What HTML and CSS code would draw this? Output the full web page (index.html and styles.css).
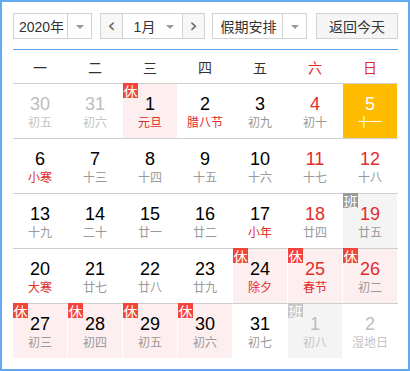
FILE: index.html
```html
<!DOCTYPE html>
<html lang="zh-CN">
<head>
  <meta charset="UTF-8" />
  <title>万年历</title>
  <link rel="stylesheet" href="styles.css">
</head>
<body>

  <div class="calendar">
    <!-- TOOLBAR -->
    <div class="toolbar">
      <div class="select year-select">
        <span class="select-text">2020年</span>
        <span class="select-arrow"></span>
      </div>
      <div class="month-group">
        <span class="nav-btn">&lsaquo;</span>
        <div class="select month-select">
          <span class="select-text">1月</span>
          <span class="select-arrow"></span>
        </div>
        <span class="nav-btn">&rsaquo;</span>
      </div>
      <div class="select holiday-select">
        <span class="select-text">假期安排</span>
        <span class="select-arrow"></span>
      </div>
      <span class="btn-today">返回今天</span>
    </div>

    <!-- WEEK HEADER -->
    <div class="week">
      <span>一</span><span>二</span><span>三</span><span>四</span><span>五</span>
      <span class="weekend">六</span><span class="weekend">日</span>
    </div>

    <!-- DAYS (filled by script) -->
    <div class="days" id="days"></div>
  </div>

  <script>
    // d: day, l: lunar text, other month, weekend, festival, rest/work badge, today
    const days = [
      { d: 30, l: "初五", other: true },
      { d: 31, l: "初六", other: true },
      { d: 1, l: "元旦", fest: true, badge: "休" },
      { d: 2, l: "腊八节", fest: true },
      { d: 3, l: "初九" },
      { d: 4, l: "初十", we: true },
      { d: 5, l: "十一", we: true, today: true },

      { d: 6, l: "小寒", fest: true },
      { d: 7, l: "十三" },
      { d: 8, l: "十四" },
      { d: 9, l: "十五" },
      { d: 10, l: "十六" },
      { d: 11, l: "十七", we: true },
      { d: 12, l: "十八", we: true },

      { d: 13, l: "十九" },
      { d: 14, l: "二十" },
      { d: 15, l: "廿一" },
      { d: 16, l: "廿二" },
      { d: 17, l: "小年", fest: true },
      { d: 18, l: "廿四", we: true },
      { d: 19, l: "廿五", we: true, badge: "班" },

      { d: 20, l: "大寒", fest: true },
      { d: 21, l: "廿七" },
      { d: 22, l: "廿八" },
      { d: 23, l: "廿九" },
      { d: 24, l: "除夕", fest: true, badge: "休" },
      { d: 25, l: "春节", fest: true, we: true, badge: "休" },
      { d: 26, l: "初二", we: true, badge: "休" },

      { d: 27, l: "初三", badge: "休" },
      { d: 28, l: "初四", badge: "休" },
      { d: 29, l: "初五", badge: "休" },
      { d: 30, l: "初六", badge: "休" },
      { d: 31, l: "初七" },
      { d: 1, l: "初八", other: true, badge: "班" },
      { d: 2, l: "湿地日", other: true }
    ];

    function renderDays() {
      const box = document.getElementById("days");
      let html = "";

      for (let i = 0; i < days.length; i++) {
        if (i % 7 === 0) html += '<div class="row">';
        const day = days[i];
        let cls = "day";
        if (day.other) cls += " other";
        if (day.we) cls += " weekend";
        if (day.fest) cls += " fest";
        if (day.today) cls += " today";
        if (day.badge === "休") cls += " rest";
        if (day.badge === "班") cls += " work";

        html += `<div class="${cls}">`;
        if (day.badge) html += `<span class="badge">${day.badge}</span>`;
        html += `<span class="num">${day.d}</span><span class="lunar">${day.l}</span></div>`;
        if (i % 7 === 6) html += "</div>";
      }

      box.innerHTML = html;
    }

    renderDays();
  </script>

</body>
</html>
```

FILE: styles.css
```css
* {
  box-sizing: border-box;
}

html, body {
  margin: 0;
  padding: 0;
  background: #fff;
}

.calendar {
  width: 410px;
  height: 371px;
  border: 2px solid #63a9f2;
  padding: 11px 10px 0 11px;
  font-family: "Liberation Sans", "Noto Sans CJK SC", sans-serif;
  color: #000;
}

/* TOOLBAR */
.toolbar {
  display: flex;
  height: 26px;
  padding-bottom: 10px;
  box-sizing: content-box;
  border-bottom: 1px solid #5a9fe8;
}

.select {
  display: flex;
  height: 26px;
  border: 1px solid #d2d2d2;
  background: #fff;
  font-family: "Noto Sans CJK SC", sans-serif;
  font-size: 14px;
  color: #333;
}

.select-text {
  flex: 1;
  display: flex;
  align-items: center;
  justify-content: center;
}

.select-arrow {
  width: 24px;
  border-left: 1px solid #d2d2d2;
  position: relative;
}

.select-arrow::after {
  content: "";
  position: absolute;
  left: 8px;
  top: 11px;
  border-left: 4px solid transparent;
  border-right: 4px solid transparent;
  border-top: 4px solid #9a9a9a;
}

.year-select {
  width: 79px;
}

.year-select .select-text {
  font-family: "Liberation Sans", "Noto Sans CJK SC", sans-serif;
  padding-left: 2px;
}

.month-group {
  display: flex;
  margin-left: 8px;
  width: 105px;
  height: 26px;
  border: 1px solid #d2d2d2;
}

.nav-btn {
  width: 22px;
  display: flex;
  align-items: center;
  justify-content: center;
  background: #f7f7f7;
  color: #666;
  font-size: 20px;
  font-family: "DejaVu Sans", sans-serif;
  line-height: 1;
  padding-bottom: 3px;
}

.month-group .nav-btn:first-child {
  border-right: 1px solid #d2d2d2;
}

.month-group .nav-btn:last-child {
  border-left: 1px solid #d2d2d2;
}

.month-select {
  flex: 1;
  border: none;
  height: 24px;
}

.month-select .select-arrow {
  border-left: none;
  width: 24px;
}

.month-select .select-text {
  font-family: "Liberation Sans", "Noto Sans CJK SC", sans-serif;
  padding-left: 8px;
}

.holiday-select {
  width: 95px;
  margin-left: 7px;
}

.holiday-select .select-text {
  padding-left: 2px;
}

.btn-today {
  margin-left: 9px;
  width: 82px;
  height: 26px;
  border: 1px solid #d2d2d2;
  background: #f5f5f5;
  display: flex;
  align-items: center;
  justify-content: center;
  font-family: "Noto Sans CJK SC", sans-serif;
  font-size: 14px;
  color: #333;
}

/* WEEK HEADER */
.week {
  display: grid;
  grid-template-columns: repeat(7, 54px);
  column-gap: 1px;
  height: 33px;
  align-items: center;
  font-family: "Noto Sans CJK SC", sans-serif;
  font-size: 14px;
  color: #333;
}

.week span {
  text-align: center;
}

.week .weekend {
  color: #e02c2c;
}

/* DAYS */
.row {
  display: grid;
  grid-template-columns: repeat(7, 54px);
  column-gap: 1px;
  border-top: 1px solid #cfcfcf;
  width: 385px;
}

.day {
  position: relative;
  height: 54px;
  display: flex;
  flex-direction: column;
  align-items: center;
  padding-top: 11px;
}

.num {
  font-size: 18px;
  line-height: 18px;
  height: 19px;
}

.lunar {
  font-family: "Noto Sans CJK SC", sans-serif;
  font-size: 12px;
  line-height: 16px;
  color: #999;
}

.day.weekend .num {
  color: #e02c2c;
}

.day.fest .lunar {
  color: #e02c2c;
}

.day.rest {
  background: #fdefef;
}

.day.work {
  background: #f4f4f4;
}

.day.today {
  background: #ffbb00;
}

.day.today .num,
.day.today .lunar {
  color: #fff;
}

.day.other .num {
  color: #bdbdbd;
}

.day.other .lunar {
  color: #c4c4c4;
}

.badge {
  position: absolute;
  left: 0;
  top: -1px;
  width: 15px;
  height: 15px;
  display: flex;
  align-items: center;
  justify-content: center;
  font-family: "Noto Sans CJK SC", sans-serif;
  font-size: 14px;
  line-height: 1;
  color: #fff;
}

.rest .badge {
  background: #f2443a;
}

.work .badge {
  background: #9a9a9a;
}

.day.other .badge {
  background: #c8c8c8;
}
```
